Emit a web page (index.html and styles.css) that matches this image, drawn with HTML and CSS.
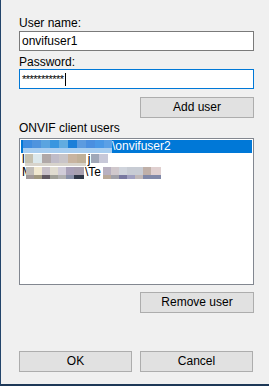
FILE: index.html
```html
<!DOCTYPE html>
<html>
  <head>
    <title>ONVIF users</title>
    <meta charset="utf-8">
    <link rel="stylesheet" href="styles.css">
  </head>
  <body>
    <div class="dialog">
      <div class="label first">User name:</div>
      <div class="field">onvifuser1</div>
      <div class="label">Password:</div>
      <div class="field focused">***********<span class="caret"></span></div>
      <div class="btn add">Add user</div>

      <div class="label list-label">ONVIF client users</div>
      <div class="listbox">
        <div class="row selected"><span class="blur blur-sel"></span>\onvifuser2</div>
        <div class="row"><span class="ch">l</span><span class="blur blur-b"></span>j<span class="blur blur-c"></span></div>
        <div class="row"><span class="ch">M</span><span class="blur blur-d"></span>\Te<span class="blur blur-e"></span></div>
      </div>
      <div class="btn remove">Remove user</div>

      <div class="buttons">
        <div class="btn">OK</div>
        <div class="btn">Cancel</div>
      </div>
    </div>
  </body>
</html>
```

FILE: styles.css
```css
html, body {
  margin: 0;
  padding: 0;
}
body {
  font-family: "Liberation Sans", Arial, sans-serif;
  font-size: 12px;
  color: #000;
  background: #f0f0f0;
}
.dialog {
  box-sizing: border-box;
  width: 269px;
  height: 386px;
  padding: 0 15px 0 18px;
  border-left: 1px solid #23456b;
  border-bottom: 2px solid #1d3857;
  display: flex;
  flex-direction: column;
}
.label {
  height: 14px;
  line-height: 14px;
  margin-top: 4px;
}
.label.first {
  margin-top: 16px;
  margin-bottom: 1px;
}
.field {
  box-sizing: border-box;
  height: 20px;
  width: 235px;
  border: 1px solid #7a7a7a;
  background: #fff;
  padding-left: 2px;
  line-height: 18px;
  display: flex;
  align-items: center;
}
.field.focused {
  border-color: #0078d7;
  letter-spacing: -0.5px;
  font-size: 11px;
}
.caret {
  display: inline-block;
  width: 1px;
  height: 13px;
  margin-left: 1px;
  background: #000;
}
.btn {
  box-sizing: border-box;
  width: 114px;
  height: 21px;
  line-height: 19px;
  text-align: center;
  background: #e1e1e1;
  border: 1px solid #adadad;
}
.add {
  margin-top: 8px;
  margin-left: 121px;
}
.list-label {
  margin-top: 3px;
}
.listbox {
  box-sizing: border-box;
  margin-top: 3px;
  width: 235px;
  height: 147px;
  border: 1px solid #828790;
  background: #fff;
  padding: 1px;
}
.row {
  height: 13px;
  line-height: 13px;
  white-space: nowrap;
  display: flex;
  align-items: center;
}
.row.selected {
  background: #0078d7;
  color: #fff;
}
.ch {
  margin-left: 1px;
}
.blur {
  display: inline-block;
  height: 13px;
  background-repeat: no-repeat;
}
.blur-sel {
  width: 89px;
  margin-left: 2px;
  background-image:
    linear-gradient(to right, #3f8de0 0 9px, #4f94de 9px 18px, #5aa4e0 18px 27px, #3896e0 27px 36px, #62ace0 36px 45px, #1b7fd9 45px 54px, #5c9be0 54px 63px, #4a8fe0 63px 72px, #4a98e6 72px 81px, #5ba0e6 81px 89px),
    linear-gradient(#a8cdef, #a8cdef);
  background-size: 89px 8px, 89px 6px;
  background-position: 0 0, 0 8px;
}
.blur-b {
  width: 61px;
  margin-right: 2px;
  background-image:
    linear-gradient(to right, #c4c0b0 0 8px, #dce8ec 8px 17px, #b0a8a8 17px 26px, #c0bcc8 26px 34px, #c8c4c8 34px 43px, #c8b4a0 43px 52px, #c0b098 52px 61px),
    linear-gradient(#d8d4cc, #d8d4cc);
  background-size: 61px 9px, 61px 4px;
  background-position: 0 1px, 0 10px;
}
.blur-c {
  width: 17px;
  margin-left: 1px;
  background-image: linear-gradient(to right, #a0a8b8 0 8px, #c8c8d8 8px 17px);
  background-size: 17px 9px;
  background-position: 0 1px;
}
.blur-d {
  width: 58px;
  margin-left: -6px;
  margin-right: 1px;
  background-color: #fff;
  background-image:
    linear-gradient(to right, #c0bcb8 0 8px, #f0e8d0 8px 16px, #c8c0c8 16px 24px, #e0dcd0 24px 32px, #d0ccd8 32px 40px, #a8a0b8 40px 48px, #a8a0b0 48px 58px),
    linear-gradient(to right, #a09898 0 8px, #a09880 8px 16px, #605860 16px 24px, #a0a098 24px 32px, #b0b0b0 32px 40px, #8890a8 40px 48px, #303848 48px 58px);
  background-size: 58px 8px, 58px 4px;
  background-position: 0 1px, 0 9px;
}
.blur-e {
  width: 58px;
  margin-left: 2px;
  background-image:
    linear-gradient(to right, #b8b0c0 0 8px, #d0c8cc 8px 16px, #d0d4dc 16px 24px, #c8ccd4 24px 32px, #c8ccd4 32px 40px, #c0b0a8 40px 48px, #e0d0d0 48px 58px),
    linear-gradient(to right, #b8a898 0 8px, #a0a0a8 8px 16px, #7878a0 16px 24px, #a0a0c0 24px 32px, #c0b8b8 32px 40px, #8088a8 40px 58px);
  background-size: 58px 8px, 58px 4px;
  background-position: 0 1px, 0 9px;
}
.remove {
  margin-top: 7px;
  margin-left: 121px;
}
.buttons {
  margin-top: 38px;
  display: flex;
  gap: 8px;
}
.buttons .btn {
  width: 113px;
}
```
